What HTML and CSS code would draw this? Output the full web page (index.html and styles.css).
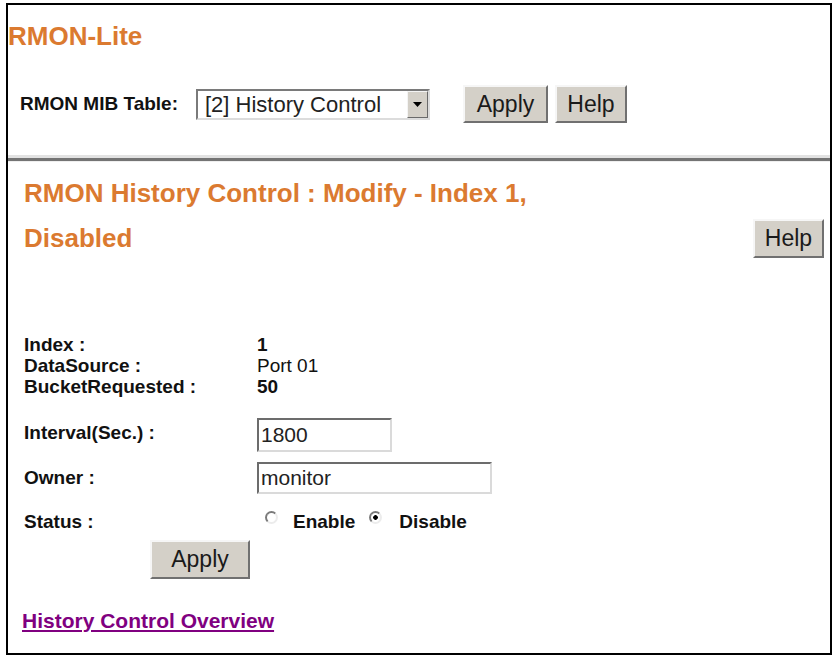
FILE: index.html
```html
<!DOCTYPE html>
<html>
<head>
<meta charset="utf-8">
<title>RMON-Lite</title>
<link rel="stylesheet" href="styles.css">
</head>
<body>
<div class="frame">
  <div class="top">
    <h1 class="page-title">RMON-Lite</h1>
    <div class="mib-row">
      <span class="mib-label">RMON MIB Table:</span>
      <div class="select">
        <span class="select-text">[2] History Control</span>
        <span class="select-btn"><svg width="9" height="5" viewBox="0 0 9 5"><path d="M0 0H9L4.5 5Z" fill="#000"/></svg></span>
      </div>
      <button class="btn btn-apply">Apply</button>
      <button class="btn btn-help">Help</button>
    </div>
  </div>
  <div class="rule"></div>
  <div class="section-head">
    <h2 class="section-title">RMON History Control : Modify - Index 1, Disabled</h2>
    <button class="btn btn-help2">Help</button>
  </div>
  <div class="form">
    <div class="row row-text"><span class="label">Index :</span><span class="value strong">1</span></div>
    <div class="row row-text"><span class="label">DataSource :</span><span class="value">Port 01</span></div>
    <div class="row row-text"><span class="label">BucketRequested :</span><span class="value strong">50</span></div>
    <div class="row row-interval"><span class="label label-raised">Interval(Sec.) :</span><input class="input input-short" type="text" value="1800"></div>
    <div class="row row-owner"><span class="label">Owner :</span><input class="input input-long" type="text" value="monitor"></div>
    <div class="row row-status">
      <span class="label">Status :</span>
      <span class="radios">
        <input class="radio radio-first" type="radio" name="status">
        <span class="radio-label">Enable</span>
        <input class="radio radio-second" type="radio" name="status" checked>
        <span class="radio-label">Disable</span>
      </span>
    </div>
    <button class="btn btn-submit">Apply</button>
  </div>
  <p class="overview-line"><a class="overview" href="#">History Control Overview</a></p>
</div>
</body>
</html>
```
FILE: styles.css
```css
body {
  margin: 0;
  background: #fff;
  font-family: "Liberation Sans", Arial, sans-serif;
  color: #111;
}

.frame {
  box-sizing: border-box;
  width: 826px;
  height: 652px;
  margin: 3px 0 0 6px;
  border: 2px solid #000;
}

.top {
  padding-top: 16px;
}

.page-title {
  margin: 0;
  font-size: 26px;
  line-height: 30px;
  font-weight: bold;
  color: #db7a30;
}

.mib-row {
  display: flex;
  align-items: center;
  height: 38px;
  margin-top: 34px;
  padding-left: 12px;
}

.mib-label {
  font-size: 19px;
  font-weight: bold;
  margin-right: 18px;
}

.select {
  box-sizing: border-box;
  display: flex;
  width: 234px;
  height: 31px;
  border: 2px solid;
  border-color: #7a7a7a #dcdcdc #dcdcdc #7a7a7a;
  background: #fff;
}

.select-text {
  flex: 1;
  font-size: 22px;
  line-height: 27px;
  padding-left: 7px;
  color: #222;
}

.select-btn {
  box-sizing: border-box;
  width: 21px;
  display: flex;
  align-items: center;
  justify-content: center;
  background: #d4d0c8;
  border: 1px solid;
  border-color: #f4f4f4 #6a6a6a #6a6a6a #f4f4f4;
}

.btn {
  box-sizing: border-box;
  height: 38px;
  padding: 0;
  font-family: inherit;
  font-size: 23px;
  color: #1a1a1a;
  background: #d4d0c8;
  border: 2px solid;
  border-color: #f6f6f6 #707070 #707070 #f6f6f6;
}

.btn-apply {
  width: 85px;
  margin-left: 33px;
}

.btn-help {
  width: 72px;
  margin-left: 7px;
}

.rule {
  margin-top: 32px;
  height: 7px;
  background: linear-gradient(#e2e2e2 0 3px, #747474 3px 6px, #efefef 6px);
}

.section-head {
  display: flex;
  justify-content: space-between;
  align-items: flex-end;
  margin-top: 9px;
  padding: 0 6px 0 16px;
}

.section-title {
  margin: 0;
  width: 560px;
  font-size: 26px;
  line-height: 45px;
  font-weight: bold;
  color: #db7a30;
}

.btn-help2 {
  width: 71px;
  height: 39px;
  margin-bottom: 3px;
}

.form {
  margin-top: 73px;
  padding-left: 16px;
}

.row {
  display: flex;
  align-items: center;
  font-size: 19px;
}

.label {
  width: 233px;
  flex: none;
  font-weight: bold;
}

.label-raised {
  margin-bottom: 5px;
}

.strong {
  font-weight: bold;
}

.row-text {
  height: 21px;
  line-height: 21px;
}

.row-interval {
  margin-top: 21px;
  height: 34px;
}

.row-owner {
  margin-top: 10px;
  height: 32px;
}

.input {
  box-sizing: border-box;
  height: 100%;
  padding: 0 0 0 2px;
  font-family: inherit;
  font-size: 21px;
  color: #222;
  background: #fff;
  border: 2px solid;
  border-color: #6c6c6c #dadada #dadada #6c6c6c;
  outline: none;
}

.input-short {
  width: 135px;
}

.input-long {
  width: 235px;
}

.row-status {
  margin-top: 16px;
  height: 23px;
}

.radios {
  display: flex;
  align-items: center;
  font-weight: bold;
}

.radio {
  appearance: none;
  -webkit-appearance: none;
  box-sizing: border-box;
  width: 13px;
  height: 13px;
  margin: 0 0 8px 0;
  border-radius: 50%;
  border: 2px solid;
  border-color: #7a7a7a #ececec #ececec #7a7a7a;
  background: #fff;
}

.radio:checked {
  background: radial-gradient(circle, #000 0 2px, #fff 2.6px);
}

.radio-first {
  margin-left: 8px;
  margin-right: 15px;
}

.radio-second {
  margin-left: 14px;
  margin-right: 17px;
}

.btn-submit {
  display: block;
  width: 100px;
  height: 39px;
  margin: 7px 0 0 126px;
}

.overview-line {
  margin: 30px 0 0 14px;
  line-height: 24px;
}

.overview {
  font-size: 21px;
  font-weight: bold;
  color: #800080;
  text-decoration: underline;
}
```
